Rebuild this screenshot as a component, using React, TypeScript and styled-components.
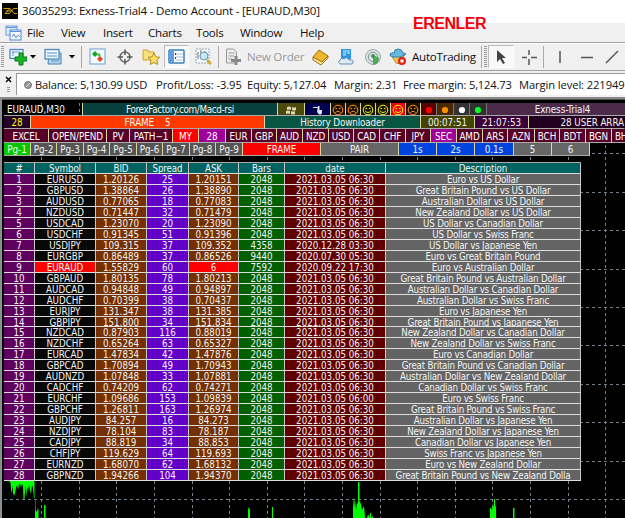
import type { ReactNode } from "react";
import styled, { createGlobalStyle } from "styled-components";

const GlobalStyle = createGlobalStyle`
	* {
		box-sizing: border-box;
	}

	body {
		margin: 0;
		background-color: #000;
		overflow: hidden;
	}
`;

const Window = styled("div")`
	position: relative;
	width: 625px;
	height: 518px;
	display: flex;
	flex-direction: column;
	overflow: hidden;
	background-color: #f0f0f0;
	color: #111;
	font-family: "Open Sans", "Noto Sans", sans-serif;
	white-space: nowrap;
`;

const TitleBar = styled("header")`
	height: 23px;
	flex: none;
	display: flex;
	align-items: center;
	padding: 0 0 1px 2px;
	gap: 4px;
	background-color: #fff;
`;

const Label = styled("span")<{ $width: number; $size?: number; $spacing?: number; $muted?: boolean }>`
	width: ${({ $width }) => $width}px;
	flex: none;
	font-size: ${({ $size }) => $size ?? 11.2}px;
	letter-spacing: ${({ $spacing }) => $spacing ?? -0.2}px;
	line-height: 18px;
	color: ${({ $muted }) => ($muted ? "#999" : "#111")};
`;

const MenuBar = styled("nav")`
	height: 19px;
	flex: none;
	display: flex;
	align-items: center;
	padding-left: 3px;
`;

const MenuItem = styled("span")<{ $width: number }>`
	width: ${({ $width }) => $width}px;
	font-size: 11.6px;
	letter-spacing: -0.25px;
	line-height: 18px;
`;

const Toolbar = styled("div")`
	height: 29px;
	flex: none;
	display: flex;
	align-items: center;
	border-top: 1px solid #a0a0a0;
	border-bottom: 1px solid #a0a0a0;
	box-shadow: inset 0 1px 0 #fff;
`;

const Slot = styled("div")<{ $width: number; $active?: boolean }>`
	width: ${({ $width }) => $width}px;
	height: 23px;
	flex: none;
	display: flex;
	align-items: center;
	justify-content: center;
	background-color: ${({ $active }) => ($active ? "#f8f8f8" : "transparent")};
	border: ${({ $active }) => ($active ? "1px solid #bbb" : "none")};
	border-right-color: #fff;
	border-bottom-color: #fff;
`;

const Divider = styled("i")`
	width: 1px;
	height: 22px;
	flex: none;
	background-color: #a8a8a8;
`;

const Grip = styled("i")<{ $height: number }>`
	width: 3px;
	height: ${({ $height }) => $height}px;
	flex: none;
	background: repeating-linear-gradient(#999 0 1px, transparent 1px 2px);
`;

const Account = styled("div")`
	height: 28px;
	flex: none;
	display: flex;
	padding-top: 2px;
	border-bottom: 2px solid #8a8a8a;
`;

const AccountClose = styled("div")`
	width: 16px;
	display: flex;
	flex-direction: column;
	align-items: center;
	gap: 4px;
	padding-top: 3px;
`;

const AccountLine = styled("div")`
	flex: 1;
	min-width: 0;
	height: 22px;
	display: flex;
	align-items: center;
	padding-left: 4px;
	background-color: #fff;
	border-top: 1px solid #999;
	border-left: 1px solid #999;
`;

const Chart = styled("main")`
	position: relative;
	flex: 1;
	display: flex;
	flex-direction: column;
	padding: 4px 0 0 4px;
	background-color: #000;
	color: #f4f4f4;
	font-family: "DejaVu Sans Condensed", "DejaVu Sans", sans-serif;
	font-size: 9.8px;
	overflow: hidden;
`;

const Backdrop = styled("svg")`
	position: absolute;
	left: 0;
	top: 0;
`;

const PanelRow = styled("div")<{ $height: number }>`
	position: relative;
	height: ${({ $height }) => $height}px;
	flex: none;
	display: flex;
`;

const Button = styled("div")<{
	$width: number;
	$bg: string;
	$color?: string;
	$line?: string;
	$align?: string;
	$spacing?: number;
}>`
	width: ${({ $width }) => $width}px;
	flex: none;
	display: flex;
	align-items: center;
	justify-content: ${({ $align }) => $align ?? "center"};
	padding-top: 1px;
	padding-left: ${({ $align }) => ($align === "flex-start" ? 3 : 0)}px;
	color: ${({ $color }) => $color ?? "#f4f4f4"};
	background-color: ${({ $bg }) => $bg};
	border-right: 1px solid ${({ $line }) => $line ?? "#d8d8a0"};
	border-bottom: 1px solid #aaa;
	line-height: 11px;
	letter-spacing: ${({ $spacing }) => $spacing ?? -0.08}px;
`;

const Table = styled("section")`
	position: relative;
	width: 577px;
	height: 319px;
	margin-top: 6px;
	display: grid;
	grid-template-rows: repeat(29, 1fr);
	border-top: 1px solid #aaa;
`;

const Row = styled("div")`
	display: grid;
	grid-template-columns: 31px 61px 51px 42px 50px 46px 101px 195px;
	min-height: 0;
`;

const Cell = styled("div")<{ $bg: string; $spacing?: number }>`
	display: flex;
	align-items: center;
	justify-content: center;
	min-width: 0;
	min-height: 0;
	line-height: 10px;
	padding-top: 2px;
	font-size: 9.7px;
	letter-spacing: ${({ $spacing }) => $spacing ?? 0}px;
	background-color: ${({ $bg }) => $bg};
	border-right: 1px solid #c8c8c8;
	border-bottom: 1px solid #ddd;
`;

const Watermark = styled("strong")`
	position: absolute;
	left: 413px;
	top: 15px;
	color: #f5000a;
	font: bold 16px/18px "Liberation Sans", sans-serif;
	letter-spacing: -0.5px;
`;

const Icon = ({ w = 18, h = 18, children }: { w?: number; h?: number; children: ReactNode }) => (
	<svg width={w} height={h} viewBox={`0 0 ${w} ${h}`} fill="none">
		{children}
	</svg>
);

const Arrow = () => (
	<Icon w={6} h={4}>
		<path d="M0 0h6L3 3.5z" fill="#000" />
	</Icon>
);

const Face = ({ happy, color, bg = "#1c1200" }: { happy?: boolean; color: string; bg?: string }) => (
	<Button $width={15} $bg={bg}>
		<Icon w={12} h={12}>
			<circle cx="6" cy="6" r="4.8" stroke={color} />
			<circle cx="4.2" cy="4.5" r=".8" fill={color} />
			<circle cx="7.8" cy="4.5" r=".8" fill={color} />
			<path d={happy ? "M3 6.8q3 3.4 6 0" : "M3.2 9q2.8-3.4 5.6 0"} stroke={color} />
		</Icon>
	</Button>
);

const Dot = ({ color, bg, width = 16 }: { color: string; bg: string; width?: number }) => (
	<Button $width={width} $bg={bg} $line="#777">
		<Icon w={8} h={8}>
			<circle cx="4" cy="4" r="3.1" fill={color} />
		</Icon>
	</Button>
);

const menu: [string, number][] = [
	["File", 34],
	["View", 42],
	["Insert", 45],
	["Charts", 48],
	["Tools", 44],
	["Window", 60],
	["Help", 40],
];

const currencies: [string, number][] = [
	["EXCEL", 45],
	["OPEN/PEND", 58],
	["PV", 23],
	["PATH−1", 43],
	["MY", 26],
	["28", 27],
	["EUR", 26],
	["GBP", 25],
	["AUD", 26],
	["NZD", 26],
	["USD", 25],
	["CAD", 26],
	["CHF", 26],
	["JPY", 25],
	["SEC", 26],
	["AMD", 26],
	["ARS", 25],
	["AZN", 27],
	["BCH", 25],
	["BDT", 26],
	["BGN", 26],
];

const currencyColor = (name: string) => {
	if (name === "MY") return "#ff0000";
	if (name === "28" || name === "SEC") return "#a0009a";
	return "#560028";
};

const headings = ["#", "Symbol", "BID", "Spread", "ASK", "Bars", "date", "Description"];

const columnColors = ["#5f005f", "#080808", "#743000", "#6300c8", "#743000", "#006000", "#600000", "#646464"];

const usual = "2021.03.05 06:30";

const quotes: string[][] = [
	["EURUSD", "1.20126", "25", "1.20151", "2048", usual, "Euro vs US Dollar"],
	["GBPUSD", "1.38864", "26", "1.38890", "2048", usual, "Great Britain Pound vs US Dollar"],
	["AUDUSD", "0.77065", "18", "0.77083", "2048", usual, "Australian Dollar vs US Dollar"],
	["NZDUSD", "0.71447", "32", "0.71479", "2048", usual, "New Zealand Dollar vs US Dollar"],
	["USDCAD", "1.23070", "20", "1.23090", "2048", usual, "US Dollar vs Canadian Dollar"],
	["USDCHF", "0.91345", "51", "0.91396", "2048", usual, "US Dollar vs Swiss Franc"],
	["USDJPY", "109.315", "37", "109.352", "4358", "2020.12.28 03:30", "US Dollar vs Japanese Yen"],
	["EURGBP", "0.86489", "37", "0.86526", "9440", "2020.07.30 05:30", "Euro vs Great Britain Pound"],
	["EURAUD", "1.55829", "60", "6", "7592", "2020.09.22 17:30", "Euro vs Australian Dollar"],
	["GBPAUD", "1.80135", "78", "1.80213", "2048", usual, "Great Britain Pound vs Australian Dollar"],
	["AUDCAD", "0.94848", "49", "0.94897", "2048", usual, "Australian Dollar vs Canadian Dollar"],
	["AUDCHF", "0.70399", "38", "0.70437", "2048", usual, "Australian Dollar vs Swiss Franc"],
	["EURJPY", "131.347", "38", "131.385", "2048", usual, "Euro vs Japanese Yen"],
	["GBPJPY", "151.800", "34", "151.834", "2048", usual, "Great Britain Pound vs Japanese Yen"],
	["NZDCAD", "0.87903", "116", "0.88019", "2048", usual, "New Zealand Dollar vs Canadian Dollar"],
	["NZDCHF", "0.65264", "63", "0.65327", "2048", usual, "New Zealand Dollar vs Swiss Franc"],
	["EURCAD", "1.47834", "42", "1.47876", "2048", usual, "Euro vs Canadian Dollar"],
	["GBPCAD", "1.70894", "49", "1.70943", "2048", usual, "Great Britain Pound vs Canadian Dollar"],
	["AUDNZD", "1.07848", "33", "1.07881", "2048", usual, "Australian Dollar vs New Zealand Dollar"],
	["CADCHF", "0.74209", "62", "0.74271", "2048", usual, "Canadian Dollar vs Swiss Franc"],
	["EURCHF", "1.09686", "153", "1.09839", "2048", "2021.03.05 06:00", "Euro vs Swiss Franc"],
	["GBPCHF", "1.26811", "163", "1.26974", "2048", usual, "Great Britain Pound vs Swiss Franc"],
	["AUDJPY", "84.257", "16", "84.273", "2048", usual, "Australian Dollar vs Japanese Yen"],
	["NZDJPY", "78.104", "83", "78.187", "2048", usual, "New Zealand Dollar vs Japanese Yen"],
	["CADJPY", "88.819", "34", "88.853", "2048", usual, "Canadian Dollar vs Japanese Yen"],
	["CHFJPY", "119.629", "64", "119.693", "2048", usual, "Swiss Franc vs Japanese Yen"],
	["EURNZD", "1.68070", "62", "1.68132", "2048", usual, "Euro vs New Zealand Dollar"],
	["GBPNZD", "1.94266", "104", "1.94370", "2048", usual, "Great Britain Pound vs New Zealand Dolla"],
];

const pages = [27, 26, 27, 26, 27, 26, 27, 26, 27];

const gridX = Array.from({ length: 16 }, (_, i) => Math.floor(41.7 + i * 37.6) + 0.5);
const gridY = Array.from({ length: 10 }, (_, i) => Math.floor(54.9 + i * 38.4) + 0.5);

const ChartBackdrop = () => (
	<Backdrop width="625" height="419" viewBox="0 0 625 419">
		<g stroke="#73808c" strokeDasharray="3 3">
			{gridX.map((x) => (
				<path key={x} d={`M${x} 4V419`} />
			))}
			{gridY.map((y) => (
				<path key={y} d={`M4 ${y}H625`} />
			))}
		</g>
		<path d="M1 0V419" stroke="#8a8f92" strokeWidth="2" />
		<path d="M2 .5H625" stroke="#555" />
		<path
			d="M9 381H34.5V397L35.5 402V411L37 413L37.5 409L38.5 411V419H35V398L34 399L33 389L32 386L31 395L30 391L29 386L28 392L27 388L26.500 398L25.500 386L24.500 400L23.500 400L23 387L22 385L21 389L20 384L19 386L18 391L17 386L16 389L15 394L14 397L13 394L12.500 387L11.500 395L10.500 384z"
			fill="#00ff00"
		/>
		<path
			d="M44 419V406H45.500V419M353 419V398L354 408L355 398L356 411L357 403L358 405V383H359.500V402L361 405L362 411L364 407L365 419H367L368 415L370 419V414H371V419L373 417V419M490 419V409L491 409L492 411L493 404L494 409V400H495V408L496 406V419M513 419V409H514.500V419M248 419V410L249 408L250 412V419M272 419V408H273V419"
			fill="#00ff00"
		/>
	</Backdrop>
);

const App = () => (
	<>
		<GlobalStyle />
		<Window>
			<TitleBar>
				<Icon w={16} h={16}>
					<path d="M0 0h16v16H0z" fill="#050505" />
					<path d="M1.500 5.500H8L3 10.500h4.500l4-5h4M8 5.500l4 5h3M4 8h5" stroke="#c99f10" />
				</Icon>
				<Label $width={340} $size={11.6} $spacing={-0.22}>
					36035293: Exness-Trial4 - Demo Account - [EURAUD,M30]
				</Label>
			</TitleBar>
			<MenuBar>
				<Slot $width={24}>
					<Icon w={20}>
						<rect x="1" y="2" width="11" height="9" fill="#dfeeff" stroke="#6d9bd9" />
						<rect x="5" y="6" width="11" height="10" fill="#f5faff" stroke="#4e86d0" />
						<path d="M1 3.500h11M5 7.500h11M7 13l2-3 2 4 2-3 2 2" stroke="#5d90d8" />
					</Icon>
				</Slot>
				{menu.map(([name, width]) => (
					<MenuItem key={name} $width={width}>
						{name}
					</MenuItem>
				))}
			</MenuBar>
			<Toolbar>
				<Slot $width={5}>
					<Grip $height={22} />
				</Slot>
				<Slot $width={25}>
					<Icon>
						<rect x="1" y="1.500" width="13" height="9" fill="#eaf5ff" stroke="#5287bc" strokeWidth="1.300" />
						<path d="M3 4h8M4 3v5" stroke="#6296c6" />
						<path d="M10 5h4v4h4v4h-4v4h-4v-4H6V9h4z" fill="#19b52a" stroke="#087b18" />
					</Icon>
				</Slot>
				<Arrow />
				<Slot $width={33}>
					<Icon>
						<path d="M5 5h12v11H4z" fill="#bcd8ef" stroke="#477fae" />
						<rect x="1" y="1.500" width="14" height="9.500" fill="#eff8ff" stroke="#5287bc" strokeWidth="1.300" />
						<path d="M3 5h10M3 8h10M7 13h8" stroke="#5790c5" />
					</Icon>
				</Slot>
				<Arrow />
				<Slot $width={6} />
				<Divider />
				<Slot $width={31}>
					<Icon>
						<rect x="1" y="1" width="15" height="15" fill="#f4faff" stroke="#69a0d0" />
						<path d="m6 3 3 3-3 3-3-3z" fill="#14a22c" />
						<path d="m11 8 3 3-3 3-3-3z" fill="#e9471c" />
						<path d="m10 5 2 2-2 2-2-2z" fill="#52bd45" />
					</Icon>
				</Slot>
				<Slot $width={24}>
					<Icon>
						<circle cx="9" cy="9" r="5" stroke="#666" strokeWidth="1.500" />
						<path d="M9 1.500v5.500M9 11v5.500M1.500 9H7M11 9h5.500" stroke="#555" strokeWidth="1.500" />
					</Icon>
				</Slot>
				<Slot $width={27}>
					<Icon>
						<path d="M1 2h5l1 2h5v8H1z" fill="#f8df79" stroke="#cba537" />
						<path d="m12 5 1.800 3.800 4 .500-3 2.800.800 4.400-3.600-2-3.700 2 .700-4.400-3-2.800 4.200-.500z" fill="#ffe36a" stroke="#ae8b22" />
					</Icon>
				</Slot>
				<Slot $width={25} $active>
					<Icon>
						<rect x="1" y="2" width="15" height="13" rx="1" fill="#fff" stroke="#347fbe" strokeWidth="1.500" />
						<path d="M2 3h4v11H2z" fill="#5e9ee0" />
						<path d="M8 6h7M8 9h7M8 12h6" stroke="#abc" />
						<path d="M7 5h1v2H7zM7 9h1v2H7z" fill="#c00" />
					</Icon>
				</Slot>
				<Slot $width={29}>
					<Icon>
						<rect x="1" y="1" width="13" height="14" fill="#fafcff" stroke="#8fa6bb" strokeDasharray="2 1" />
						<path d="M3 4v7M6 2v5M10 3v6" stroke="#666" />
						<circle cx="9" cy="8" r="4" fill="#c7e8f7" stroke="#6b93af" />
						<path d="m12 12 4 4" stroke="#d6a829" strokeWidth="2.500" />
					</Icon>
				</Slot>
				<Divider />
				<Slot $width={28}>
					<Icon>
						<path d="M2.500 1h7l3 3v11h-10z" fill="#eee" stroke="#999" />
						<path d="M4.500 5h6M4.500 8h6M4.500 11h4" stroke="#999" />
						<path d="M10.500 8h3v3h3.500v3h-3.500v3h-3v-3H7v-3h3.500z" fill="#888" />
					</Icon>
				</Slot>
				<Label $width={63} $size={11.6} $spacing={-0.22} $muted>
					New Order
				</Label>
				<Slot $width={20}>
					<Icon>
						<path d="m2 9 6-7 9 6-6 7z" fill="#efb82d" stroke="#9b6b16" />
						<path d="m2 9v3l8 5 7-7V8l-6 6z" fill="#ffe8a0" stroke="#9b6b16" />
					</Icon>
				</Slot>
				<Slot $width={32}>
					<Icon>
						<path d="M4 1h10v10H4z" fill="#2b95e3" />
						<path d="M6 3h7M6 5h3M10 5h3M6 7h3" stroke="#d8f1ff" />
						<path d="M4 16q-4-1-1-4 1-3 4-1 3-3 5 1 5-1 4 3-.500 1-2 1z" fill="#dce9f6" stroke="#6b8ba8" />
					</Icon>
				</Slot>
				<Slot $width={22}>
					<Icon>
						<circle cx="9" cy="9" r="7.500" fill="#dce2e4" stroke="#9ba7ac" />
						<circle cx="9" cy="9" r="4.700" stroke="#7f9298" />
						<path d="M9 7v10q6-1 6-7" fill="#4daa55" />
						<circle cx="9" cy="8" r="2" fill="#379d48" />
					</Icon>
				</Slot>
				<Slot $width={28}>
					<Icon>
						<path d="M2 7h13l-3 9-5-1z" fill="#f7cb4a" stroke="#b88b22" />
						<path d="M1 6q3-2 4-1 0-4 4-4 4 0 5 4 4 0 2 2-4 3-12 2-4-1-3-3z" fill="#69b8de" stroke="#307fa9" />
						<circle cx="13" cy="13" r="4" fill="#e42211" />
						<path d="M11.500 11.500h3v3h-3z" fill="#fff" />
					</Icon>
				</Slot>
				<Label $width={69} $size={11.6} $spacing={-0.25}>
					AutoTrading
				</Label>
				<Divider />
				<Slot $width={6}>
					<Grip $height={22} />
				</Slot>
				<Slot $width={26} $active>
					<Icon>
						<path d="M5 2v12l3-3 3 5 2-1-3-5h4z" fill="#444" />
					</Icon>
				</Slot>
				<Slot $width={29}>
					<Icon>
						<path d="M9 2v5M9 11v6M2 9.500h5M11 9.500h6" stroke="#555" strokeWidth="1.500" />
					</Icon>
				</Slot>
				<Divider />
				<Slot $width={31}>
					<Icon>
						<path d="M9 3v12" stroke="#555" strokeWidth="1.500" />
					</Icon>
				</Slot>
				<Slot $width={24}>
					<Icon>
						<path d="M3 9.500h12" stroke="#555" strokeWidth="1.500" />
					</Icon>
				</Slot>
				<Slot $width={26}>
					<Icon>
						<path d="M3 15 15 3" stroke="#555" strokeWidth="1.500" />
					</Icon>
				</Slot>
			</Toolbar>
			<Account>
				<AccountClose>
					<Icon w={7} h={7}>
						<path d="m1 1 5 5M6 1 1 6" stroke="#000" strokeWidth="1.400" />
					</Icon>
					<Grip $height={6} />
				</AccountClose>
				<AccountLine>
					<Slot $width={14}>
						<Icon w={8} h={8}>
							<circle cx="4" cy="4" r="3.500" fill="#999" stroke="#777" />
							<path d="m2 6 4-4" stroke="#ddd" />
						</Icon>
					</Slot>
					<Label $width={121}>Balance: 5,130.99 USD</Label>
					<Label $width={91} $spacing={-0.1}>Profit/Loss: -3.95</Label>
					<Label $width={87}>Equity: 5,127.04</Label>
					<Label $width={69} $spacing={-0.1}>Margin: 2.31</Label>
					<Label $width={116}>Free margin: 5,124.73</Label>
					<Label $width={107} $spacing={-0.1}>Margin level: 221949</Label>
				</AccountLine>
			</Account>
			<Chart>
				<ChartBackdrop />
				<PanelRow $height={13}>
					<Button $width={79} $bg="transparent" $align="flex-start">
						EURAUD,M30
					</Button>
					<Button $width={195} $bg="#08403d" $spacing={-0.35}>
						ForexFactory.com/Macd-rsi
					</Button>
					<Button $width={27} $bg="#4b4a0b">
						<Icon w={12} h={10}>
							<path d="M2 2q2-1 4 0v3Q4 4 2 5zM7 2q2 1 4 0v3q-2 1-4 0zM1 6q2-1 4 0v3q-2-1-4 0zM6 6q2 1 4 0v3q-2 1-4 0z" fill="#ded8b5" />
						</Icon>
					</Button>
					<Button $width={26} $bg="#000050">
						<Icon w={10} h={10}>
							<path d="M0 2.500h5" stroke="#dce5e6" />
							<path d="M5 1h1.500v4H9v3L8 9.500H6L4 7z" fill="#dce5e6" />
						</Icon>
					</Button>
					<Face color="#ff8c28" />
					<Face color="#ff8c28" />
					<Face happy color="#e7ff24" />
					<Face happy color="#e7ff24" />
					<Face happy color="#ffff30" bg="#f00000" />
					<Face color="#ff8c28" />
					<Dot color="#ff0000" bg="#580000" />
					<Dot color="#ff9100" bg="#4a2900" width={17} />
					<Dot color="#ffffff" bg="#333333" />
					<Dot color="#00ff20" bg="#303030" width={17} />
					<Button $width={152} $bg="#4b2b49">
						Exness-Trial4
					</Button>
				</PanelRow>
				<PanelRow $height={13}>
					<Button $width={27} $bg="#230026" $color="#ffff00">
						28
					</Button>
					<Button $width={234} $bg="#ff3900">
						FRAME &nbsp; &nbsp;5
					</Button>
					<Button $width={156} $bg="#075644" $spacing={-0.15}>
						History Downloader
					</Button>
					<Button $width={54} $bg="#434300">
						00:07:51
					</Button>
					<Button $width={54} $bg="#390039">
						21:07:53
					</Button>
					<Button $width={96} $bg="#220020" $line="#220020" $align="flex-end">
						28 USER ARRA
					</Button>
				</PanelRow>
				<PanelRow $height={14}>
					{currencies.map(([name, width]) => (
						<Button key={name} $width={width} $bg={currencyColor(name)} $color="#fff">
							{name}
						</Button>
					))}
					<Button $width={18} $bg="#560028" $align="flex-start" $spacing={-0.3} $line="#560028">
						BH
					</Button>
				</PanelRow>
				<PanelRow $height={13}>
					{pages.map((width, i) => (
						<Button key={i} $width={width} $bg={i === 0 ? "#00c800" : "#555"}>
							Pg-{i + 1}
						</Button>
					))}
					<Button $width={78} $bg="#ff0000">
						FRAME
					</Button>
					<Button $width={78} $bg="#666">
						PAIR
					</Button>
					<Button $width={38} $bg="#0044df">
						1s
					</Button>
					<Button $width={38} $bg="#0044df">
						2s
					</Button>
					<Button $width={39} $bg="#0044df">
						0.1s
					</Button>
					<Button $width={38} $bg="#666">
						5
					</Button>
					<Button $width={38} $bg="#666">
						6
					</Button>
				</PanelRow>
				<Table>
					<Row>
						{headings.map((heading) => (
							<Cell key={heading} $bg="#006261" $spacing={-0.1}>
								{heading}
							</Cell>
						))}
					</Row>
					{quotes.map((quote, row) => (
						<Row key={quote[0]}>
							{[String(row + 1), ...quote].map((value, col) => (
								<Cell
									key={col}
									$bg={row === 8 && (col === 1 || col === 4) ? "#ff0000" : columnColors[col]}
									$spacing={col === 7 ? -0.2 : 0}
								>
									{value}
								</Cell>
							))}
						</Row>
					))}
				</Table>
			</Chart>
			<Watermark>ERENLER</Watermark>
		</Window>
	</>
);

export default App;
